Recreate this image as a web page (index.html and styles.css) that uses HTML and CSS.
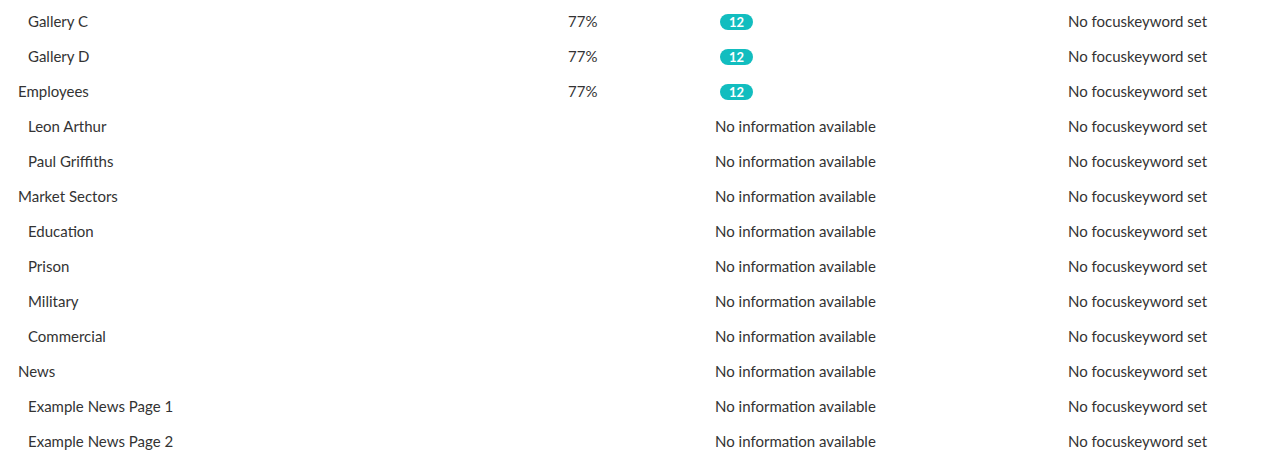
FILE: index.html
```html
<!DOCTYPE html>
<html>
<head>
<meta charset="utf-8">
<link rel="stylesheet" href="styles.css">
</head>
<body>
<div class="list">
  <div class="row child"><span class="name">Gallery C</span><span class="pct">77%</span><span class="info"><span class="badge">12</span></span><span class="kw">No focuskeyword set</span></div>
  <div class="row child"><span class="name">Gallery D</span><span class="pct">77%</span><span class="info"><span class="badge">12</span></span><span class="kw">No focuskeyword set</span></div>
  <div class="row"><span class="name">Employees</span><span class="pct">77%</span><span class="info"><span class="badge">12</span></span><span class="kw">No focuskeyword set</span></div>
  <div class="row child"><span class="name">Leon Arthur</span><span class="pct"></span><span class="info">No information available</span><span class="kw">No focuskeyword set</span></div>
  <div class="row child"><span class="name">Paul Griffiths</span><span class="pct"></span><span class="info">No information available</span><span class="kw">No focuskeyword set</span></div>
  <div class="row"><span class="name">Market Sectors</span><span class="pct"></span><span class="info">No information available</span><span class="kw">No focuskeyword set</span></div>
  <div class="row child"><span class="name">Education</span><span class="pct"></span><span class="info">No information available</span><span class="kw">No focuskeyword set</span></div>
  <div class="row child"><span class="name">Prison</span><span class="pct"></span><span class="info">No information available</span><span class="kw">No focuskeyword set</span></div>
  <div class="row child"><span class="name">Military</span><span class="pct"></span><span class="info">No information available</span><span class="kw">No focuskeyword set</span></div>
  <div class="row child"><span class="name">Commercial</span><span class="pct"></span><span class="info">No information available</span><span class="kw">No focuskeyword set</span></div>
  <div class="row"><span class="name">News</span><span class="pct"></span><span class="info">No information available</span><span class="kw">No focuskeyword set</span></div>
  <div class="row child"><span class="name">Example News Page 1</span><span class="pct"></span><span class="info">No information available</span><span class="kw">No focuskeyword set</span></div>
  <div class="row child"><span class="name">Example News Page 2</span><span class="pct"></span><span class="info">No information available</span><span class="kw">No focuskeyword set</span></div>
</div>
</body>
</html>
```
FILE: styles.css
```css
html, body {
  margin: 0;
  padding: 0;
  background: #ffffff;
}
body {
  font-family: Lato, "Open Sans", sans-serif;
  font-size: 15px;
  color: #333333;
}
.list {
  padding-top: 4px;
}
.row {
  display: grid;
  grid-template-columns: 550px 147px 353px 1fr;
  height: 35px;
  line-height: 35px;
  padding-left: 18px;
  white-space: nowrap;
}
.row.child .name {
  padding-left: 10px;
}
.info {
  display: flex;
  align-items: center;
}
.badge {
  display: inline-block;
  margin-left: 5px;
  width: 33px;
  height: 16px;
  line-height: 16px;
  border-radius: 8px;
  background: #12bdbf;
  color: #ffffff;
  font-size: 13px;
  font-weight: 700;
  text-align: center;
}
```
